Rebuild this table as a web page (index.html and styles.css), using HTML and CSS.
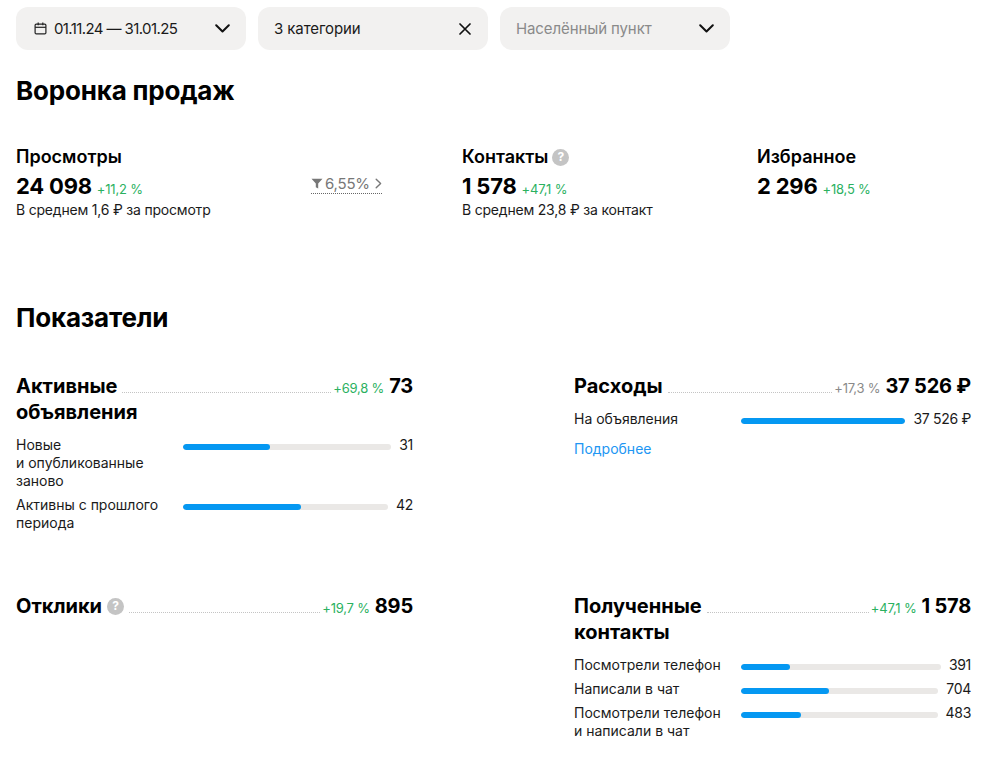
FILE: index.html
```html
<!DOCTYPE html>
<html lang="ru">
<head>
<meta charset="utf-8">
<title>Статистика</title>
<link rel="stylesheet" href="styles.css">
</head>
<body>
<div class="page">
  <div class="filters">
    <div class="filter">
      <svg class="cal" width="13" height="13" viewBox="0 0 13 13"><rect x="1.1" y="2.1" width="10.8" height="9.8" rx="1.2" fill="none" stroke="#222" stroke-width="1.2"/><line x1="1.1" y1="5.3" x2="11.9" y2="5.3" stroke="#222" stroke-width="1.2"/><line x1="4.2" y1="0.6" x2="4.2" y2="3.2" stroke="#222" stroke-width="1.2"/><line x1="8.8" y1="0.6" x2="8.8" y2="3.2" stroke="#222" stroke-width="1.2"/></svg>
      <span class="ftext date">01.11.24 — 31.01.25</span>
      <svg class="chev" width="15" height="9" viewBox="0 0 15 9"><path d="M1.2 1.2 L7.5 7.5 L13.8 1.2" fill="none" stroke="#111" stroke-width="2" stroke-linecap="round" stroke-linejoin="round"/></svg>
    </div>
    <div class="filter">
      <span class="ftext">3 категории</span>
      <svg class="xic" width="12" height="12" viewBox="0 0 12 12"><path d="M1 1 L11 11 M11 1 L1 11" fill="none" stroke="#111" stroke-width="1.7" stroke-linecap="round"/></svg>
    </div>
    <div class="filter">
      <span class="ftext placeholder">Населённый пункт</span>
      <svg class="chev" width="15" height="9" viewBox="0 0 15 9"><path d="M1.2 1.2 L7.5 7.5 L13.8 1.2" fill="none" stroke="#111" stroke-width="2" stroke-linecap="round" stroke-linejoin="round"/></svg>
    </div>
  </div>

  <h1 class="h1 funnel-h">Воронка продаж</h1>

  <div class="funnel">
    <div class="fcol fcol1">
      <div class="fitem">
        <div class="ftitle">Просмотры</div>
        <div class="fvalue"><span class="num">24 098</span><span class="delta green">+11,2 %</span></div>
        <div class="fnote">В среднем 1,6 ₽ за просмотр</div>
      </div>
      <div class="conv">
        <svg width="12" height="11" viewBox="0 0 12 11"><path d="M0.5 0.8 H11.5 L7.2 5.6 V10.4 L4.8 9.2 V5.6 Z" fill="#777"/></svg>
        <span>6,55%</span>
        <svg width="7" height="11" viewBox="0 0 7 11"><path d="M1.2 1.2 L5.6 5.5 L1.2 9.8" fill="none" stroke="#777" stroke-width="1.4" stroke-linecap="round" stroke-linejoin="round"/></svg>
      </div>
    </div>
    <div class="fcol">
      <div class="fitem">
        <div class="ftitle">Контакты <span class="help">?</span></div>
        <div class="fvalue"><span class="num">1 578</span><span class="delta green">+47,1 %</span></div>
        <div class="fnote">В среднем 23,8 ₽ за контакт</div>
      </div>
    </div>
    <div class="fcol">
      <div class="fitem">
        <div class="ftitle">Избранное</div>
        <div class="fvalue"><span class="num">2 296</span><span class="delta green">+18,5 %</span></div>
      </div>
    </div>
  </div>

  <h1 class="h1 metrics-h">Показатели</h1>

  <div class="metrics">
    <div class="metric">
      <div class="mhead">
        <div class="mline"><span class="mtitle">Активные</span><span class="leader"></span><span class="delta green">+69,8 %</span><span class="mval">73</span></div>
        <div class="mtitle">объявления</div>
      </div>
      <div class="rows">
        <div class="row"><div class="rlabel">Новые<br>и опубликованные заново</div><div class="bar"><div class="fill" style="width:42%"></div></div><div class="rval">31</div></div>
        <div class="row"><div class="rlabel">Активны с прошлого периода</div><div class="bar"><div class="fill" style="width:57.5%"></div></div><div class="rval">42</div></div>
      </div>
    </div>

    <div class="metric">
      <div class="mhead">
        <div class="mline"><span class="mtitle">Расходы</span><span class="leader"></span><span class="delta grey">+17,3 %</span><span class="mval">37 526 ₽</span></div>
      </div>
      <div class="rows">
        <div class="row"><div class="rlabel">На объявления</div><div class="bar"><div class="fill" style="width:100%"></div></div><div class="rval">37 526 ₽</div></div>
      </div>
      <a class="more" href="#">Подробнее</a>
    </div>

    <div class="metric">
      <div class="mhead">
        <div class="mline"><span class="mtitle">Отклики</span><span class="help mhelp">?</span><span class="leader"></span><span class="delta green">+19,7 %</span><span class="mval">895</span></div>
      </div>
    </div>

    <div class="metric">
      <div class="mhead">
        <div class="mline"><span class="mtitle">Полученные</span><span class="leader"></span><span class="delta green">+47,1 %</span><span class="mval">1 578</span></div>
        <div class="mtitle">контакты</div>
      </div>
      <div class="rows">
        <div class="row"><div class="rlabel">Посмотрели телефон</div><div class="bar"><div class="fill" style="width:24.7%"></div></div><div class="rval">391</div></div>
        <div class="row"><div class="rlabel">Написали в чат</div><div class="bar"><div class="fill" style="width:44.7%"></div></div><div class="rval">704</div></div>
        <div class="row"><div class="rlabel">Посмотрели телефон и написали в чат</div><div class="bar"><div class="fill" style="width:30.6%"></div></div><div class="rval">483</div></div>
      </div>
    </div>
  </div>
</div>
</body>
</html>
```

FILE: styles.css
```css
* { box-sizing: border-box; }
html, body { margin: 0; padding: 0; background: #fff; }
body {
  font-family: Inter, "Noto Sans", "Liberation Sans", sans-serif;
  color: #111;
  -webkit-font-smoothing: antialiased;
}
.page { width: 971px; padding: 7px 0 0 16px; }

.filters { display: flex; gap: 12px; }
.filter {
  width: 230px; height: 43px;
  background: #f2f1f0; border-radius: 12px;
  display: flex; align-items: center;
  padding: 0 16px;
}
.filter .cal { margin: 0 7px 0 2px; flex: none; }
.ftext { flex: 1; font-size: 15px; color: #1a1a1a; letter-spacing: -0.1px; }
.date { letter-spacing: -0.6px; }
.placeholder { color: #8a8a8a; }
.chev { flex: none; }
.xic { flex: none; margin-right: 1px; }

.h1 { margin: 0; font-size: 26px; line-height: 32px; font-weight: 700; letter-spacing: -0.2px; color: #000; }
.funnel-h { margin-top: 25px; }

.funnel { display: grid; grid-template-columns: 446px 295px 1fr; margin-top: 38px; }
.fcol1 { display: flex; }
.fitem { width: 295px; }
.ftitle { font-size: 18px; line-height: 24px; font-weight: 600; color: #000; display: flex; align-items: center; gap: 4px; }
.fvalue { display: flex; align-items: baseline; gap: 5px; margin-top: 3px; height: 28px; }
.num { font-size: 22px; line-height: 28px; font-weight: 700; color: #000; letter-spacing: -0.2px; }
.delta { font-size: 13px; white-space: nowrap; letter-spacing: -0.2px; }
.green { color: #2bb15f; }
.grey { color: #8a8a8a; }
.fnote { font-size: 14px; line-height: 20px; color: #1a1a1a; letter-spacing: -0.2px; }

.conv {
  margin-top: 29px; height: 20px;
  display: flex; align-items: center; gap: 2px;
  color: #777; font-size: 15px; letter-spacing: -0.2px;
  border-bottom: 1px dotted #666;
  align-self: flex-start;
}
.conv svg:last-child { margin-left: 3px; }

.help {
  display: inline-flex; align-items: center; justify-content: center;
  width: 17px; height: 17px; border-radius: 50%;
  background: #c4c4c4; color: #fff;
  font-size: 12px; font-weight: 700; line-height: 1;
}

.metrics-h { margin-top: 82px; }
.metrics {
  display: grid; grid-template-columns: 397px 397px;
  column-gap: 161px; row-gap: 61px;
  margin-top: 39px;
}
.mline { display: flex; align-items: baseline; }
.mtitle { font-size: 20px; line-height: 26px; font-weight: 700; color: #000; }
.mhelp { margin-left: 5px; align-self: center; }
.leader { flex: 1; height: 0; border-bottom: 1px dotted #c4c4c4; margin: 0 2px 0 5px; }
.mval { font-size: 20px; line-height: 26px; font-weight: 700; color: #000; margin-left: 5px; white-space: nowrap; letter-spacing: -0.2px; }

.rows { margin-top: 11px; display: flex; flex-direction: column; gap: 6px; }
.row { display: flex; align-items: flex-start; font-size: 14px; line-height: 18px; color: #1a1a1a; }
.rlabel { width: 157px; margin-right: 10px; flex: none; }
.bar { flex: 1; height: 6px; border-radius: 3px; background: #eae8e6; margin-top: 8px; overflow: hidden; }
.fill { height: 100%; background: #0598f2; border-radius: 3px; }
.rval { margin-left: 8px; white-space: nowrap; text-align: right; letter-spacing: -0.3px; }

.more { display: block; margin-top: 12px; font-size: 14px; line-height: 18px; color: #2196f3; text-decoration: none; }
```
